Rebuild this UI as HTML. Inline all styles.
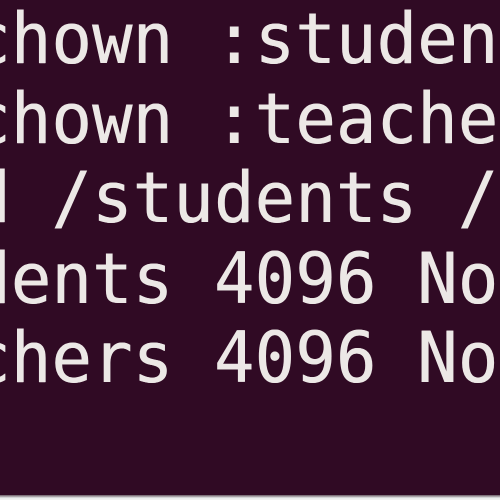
<!DOCTYPE html>
<html><head><meta charset="utf-8"><style>
html,body{margin:0;padding:0;}
body{width:500px;height:500px;background:#300a24;position:relative;overflow:hidden;}
.l{position:absolute;left:-30px;white-space:pre;font-family:"DejaVu Sans Mono","Liberation Mono",monospace;font-size:67px;line-height:80px;color:#ece8e6;letter-spacing:0.3px;transform:scaleY(1.05);transform-origin:0 63px;text-shadow:0.6px 0 0 #ece8e6;}
.b{position:absolute;left:0;right:0;bottom:0;height:5px;background:linear-gradient(#6a5a64,#e8ecec 60%,#f4f4f4);}
</style></head><body>
<div class="l" style="top:0px">chown :students</div>
<div class="l" style="top:80px">chown :teachers</div>
<div class="l" style="top:159px">d /students /teachers</div>
<div class="l" style="top:240px">dents 4096 Nov</div>
<div class="l" style="top:319px">chers 4096 Nov</div>
<div class="b"></div>
</body></html>
